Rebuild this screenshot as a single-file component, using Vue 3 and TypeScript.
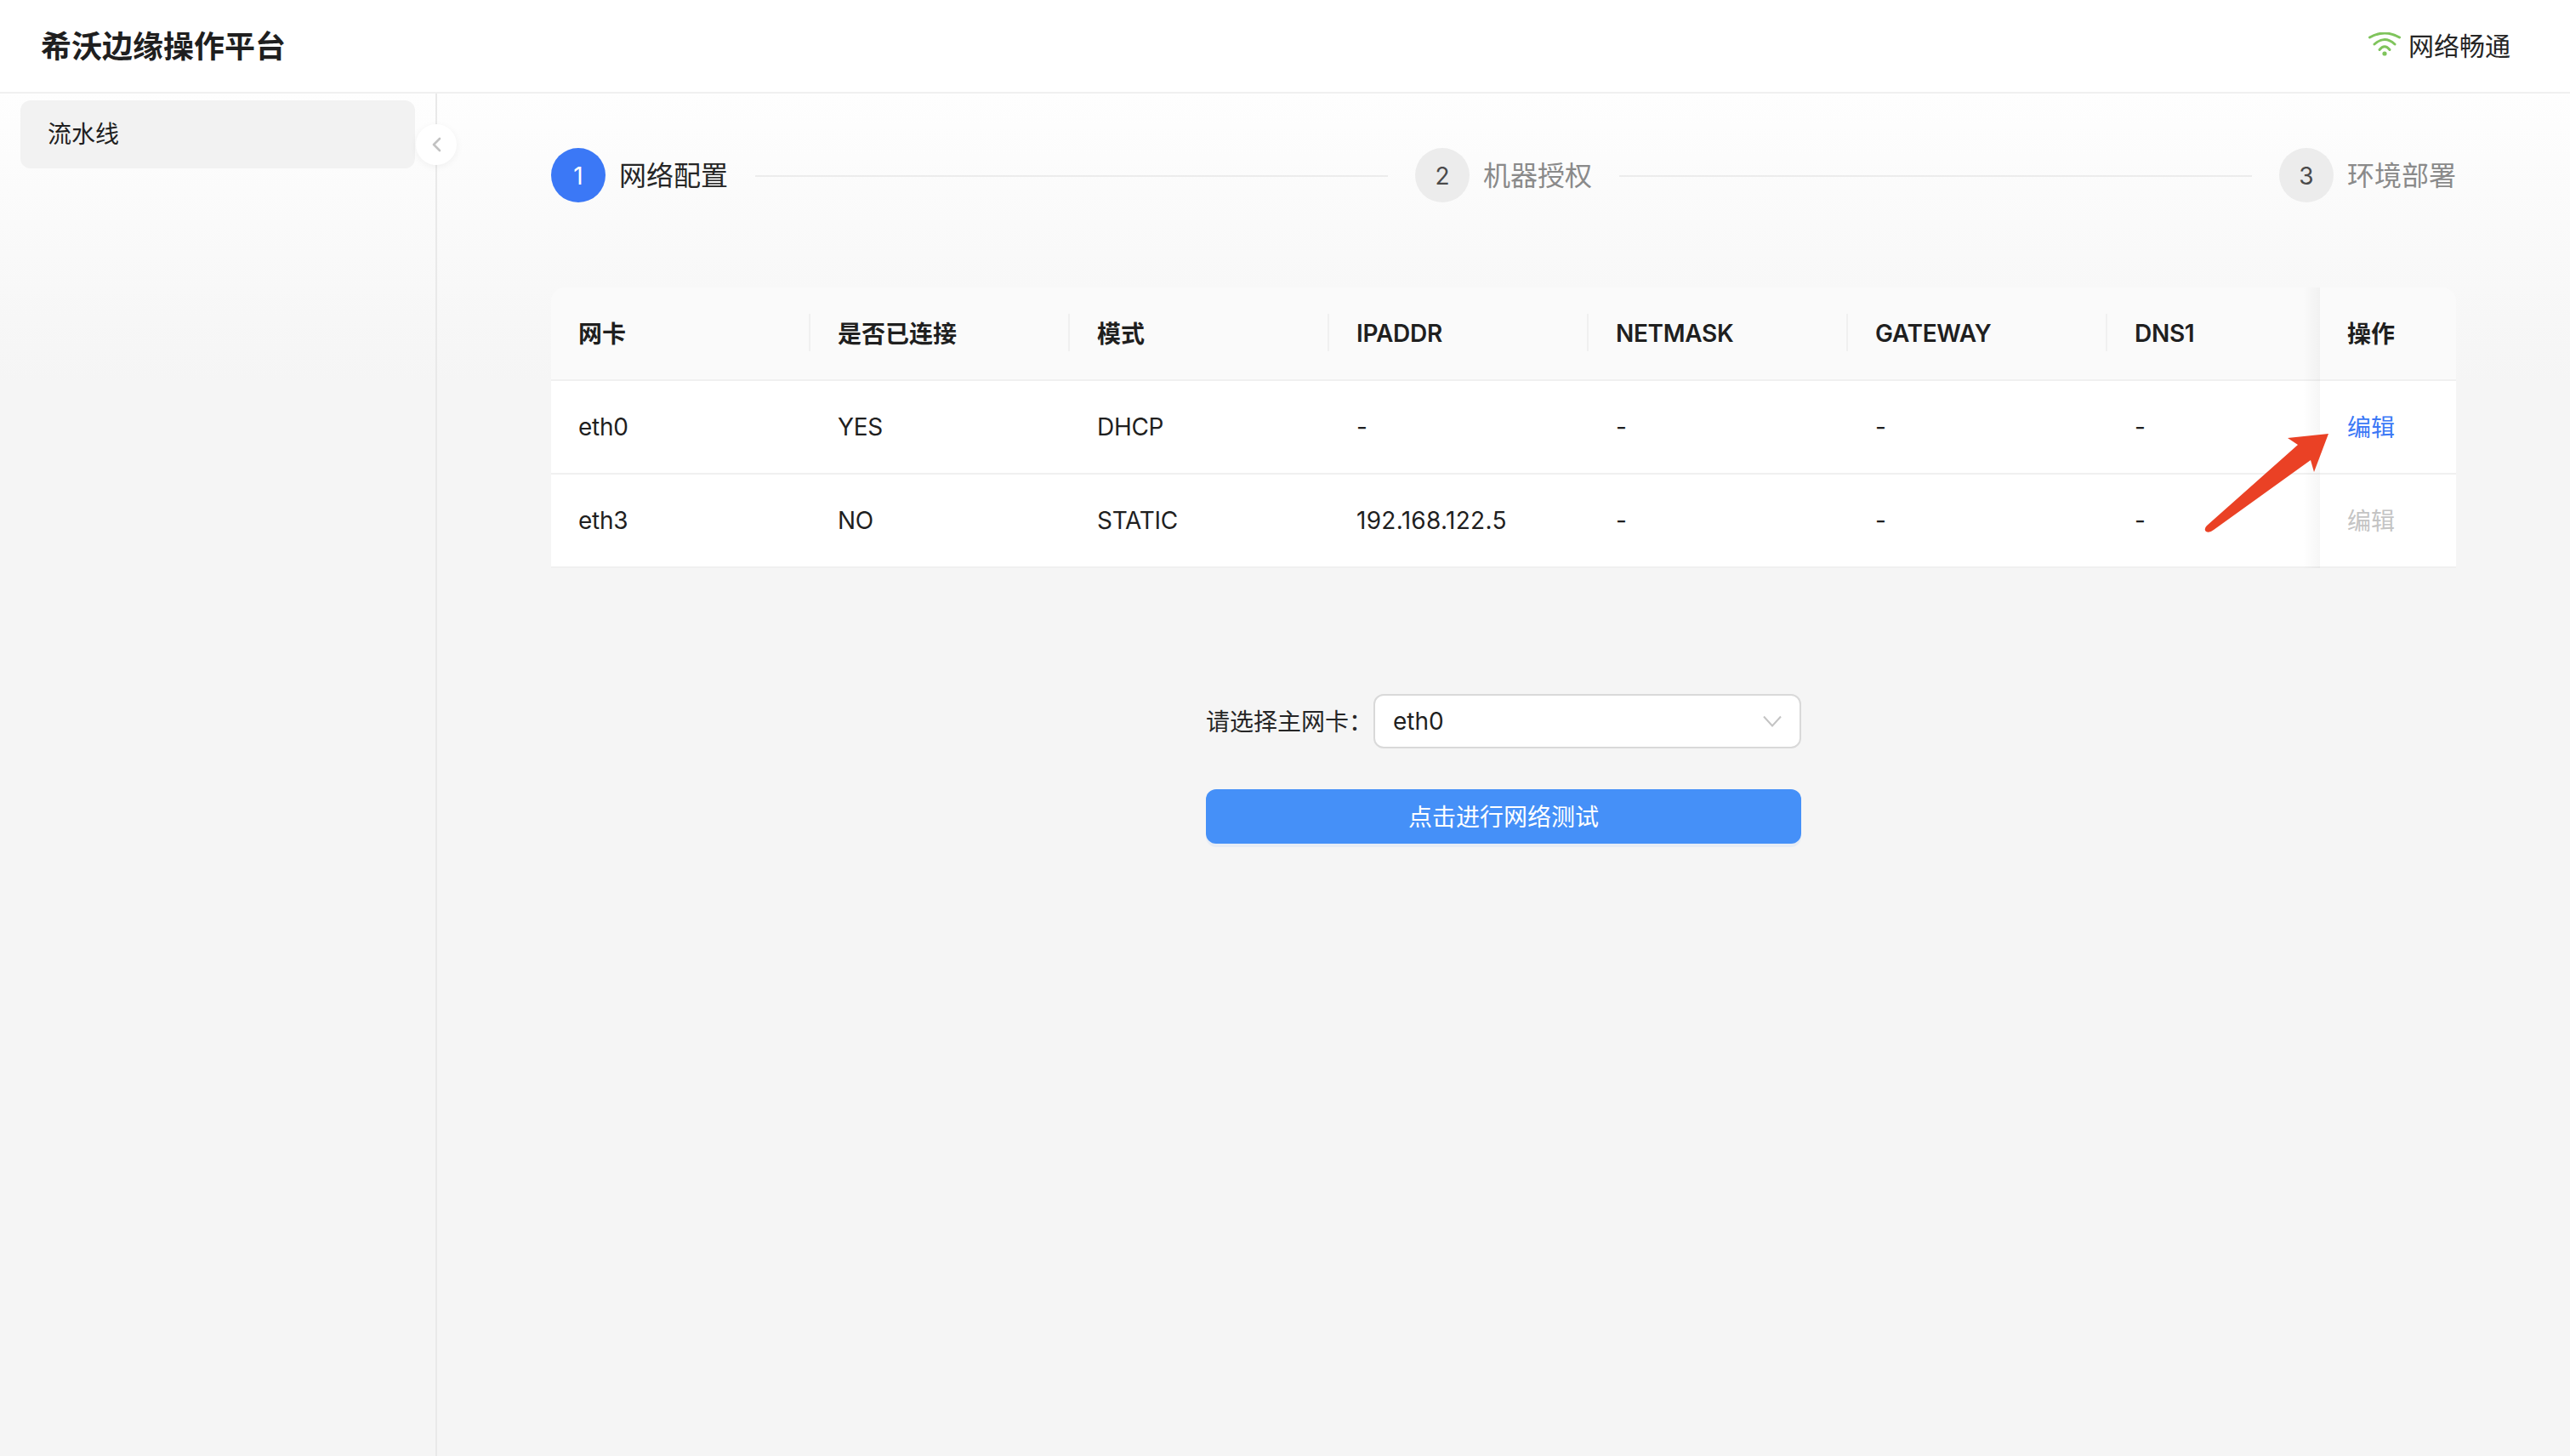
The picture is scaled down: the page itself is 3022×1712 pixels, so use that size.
<script setup lang="ts">
interface Row {
  cells: string[]
  enabled: boolean
}

const steps: string[] = ['网络配置', '机器授权', '环境部署']
const columns: string[] = ['网卡', '是否已连接', '模式', 'IPADDR', 'NETMASK', 'GATEWAY', 'DNS1']
const rows: Row[] = [
  { cells: ['eth0', 'YES', 'DHCP', '-', '-', '-', '-'], enabled: true },
  { cells: ['eth3', 'NO', 'STATIC', '192.168.122.5', '-', '-', '-'], enabled: false },
]

const isNumeric = (cell: string): boolean => /^\d/.test(cell)
</script>

<template>
  <div class="app">
    <header class="topbar">
      <div class="brand">希沃边缘操作平台</div>
      <div class="status">
        <svg class="wifi" width="38" height="28" viewBox="0 0 38 28" fill="none">
          <path d="M1.5 6Q19 -4 36.5 6" stroke="#7fc45c" stroke-width="3" stroke-linecap="round" />
          <path d="M7 14Q19 3 31 14" stroke="#7fc45c" stroke-width="3" stroke-linecap="round" />
          <path d="M13 20.5Q19 13 25 20.5" stroke="#7fc45c" stroke-width="3" stroke-linecap="round" />
          <circle cx="19" cy="25" r="2.6" fill="#7fc45c" />
        </svg>
        <span>网络畅通</span>
      </div>
    </header>

    <div class="body">
      <aside class="sidebar">
        <div class="menu-item">流水线</div>
        <button class="collapse" type="button" aria-label="收起">
          <svg width="12" height="18" viewBox="0 0 12 18" fill="none">
            <path d="M10 2L3 9L10 16" stroke="#c2c2c2" stroke-width="2.6" stroke-linecap="round" stroke-linejoin="round" />
          </svg>
        </button>
      </aside>

      <main class="main">
        <ol class="steps">
          <li v-for="(step, i) in steps" :key="step" class="step" :class="{ active: i === 0, last: i === steps.length - 1 }">
            <span class="dot">{{ i + 1 }}</span>
            <span class="step-label">{{ step }}</span>
            <span v-if="i < steps.length - 1" class="step-line"></span>
          </li>
        </ol>

        <div class="table-wrap">
          <table class="table">
            <colgroup>
              <col v-for="c in 6" :key="c" class="col-std" />
              <col class="col-dns" />
              <col class="col-op" />
            </colgroup>
            <thead>
              <tr>
                <th v-for="col in columns" :key="col" class="sep">{{ col }}</th>
                <th class="op">操作</th>
              </tr>
            </thead>
            <tbody>
              <tr v-for="row in rows" :key="row.cells[0]">
                <td v-for="(cell, i) in row.cells" :key="i" :class="{ num: isNumeric(cell) }">{{ cell }}</td>
                <td class="op">
                  <a class="edit" :class="{ disabled: !row.enabled }">编辑</a>
                </td>
              </tr>
            </tbody>
          </table>
        </div>

        <div class="form">
          <div class="field">
            <label class="field-label">请选择主网卡：</label>
            <div class="select">
              <span>eth0</span>
              <svg width="24" height="14" viewBox="0 0 24 14" fill="none">
                <path d="M2 1.5L12 12.5L22 1.5" stroke="#c4c4c4" stroke-width="2" />
              </svg>
            </div>
          </div>
          <button class="test-btn" type="button">点击进行网络测试</button>
        </div>
      </main>
    </div>

    <svg class="arrow" width="150" height="122" viewBox="0 0 150 122">
      <path
        d="M148 6L100 11L112 19L5 114Q1 118 4 121Q8 123 13 119L127 37L131 51Z"
        fill="#ea4125"
      />
    </svg>
  </div>
</template>

<style scoped>
.app {
  position: relative;
  display: flex;
  flex-direction: column;
  min-height: 1712px;
  font-family: Inter, "Noto Sans CJK SC", sans-serif;
  color: #1f1f1f;
  background: #f5f5f5;
}
.topbar {
  display: flex;
  align-items: center;
  justify-content: space-between;
  box-sizing: border-box;
  height: 110px;
  padding: 0 70px 4px 48px;
  background: #fff;
  border-bottom: 2px solid #f0f0f0;
}
.brand {
  font-size: 36px;
  font-weight: 600;
  color: #1f1f1f;
}
.status {
  display: flex;
  align-items: center;
  gap: 9px;
  font-size: 30px;
  color: #262626;
}
.wifi {
  margin-top: 0;
}
.body {
  flex: 1;
  display: flex;
  background: linear-gradient(180deg, #fefefe 0, #f5f5f5 340px);
}
.sidebar {
  position: relative;
  box-sizing: border-box;
  flex: none;
  width: 514px;
  padding: 8px 24px 0;
  border-right: 2px solid #e9e9e9;
}
.menu-item {
  box-sizing: border-box;
  width: 464px;
  height: 80px;
  padding-left: 32px;
  line-height: 80px;
  font-size: 28px;
  background: #f2f2f2;
  border-radius: 12px;
}
.collapse {
  position: absolute;
  top: 36px;
  right: -25px;
  display: flex;
  align-items: center;
  justify-content: center;
  width: 48px;
  height: 48px;
  padding: 0;
  background: #fff;
  border: none;
  border-radius: 50%;
  box-shadow: 0 2px 8px rgba(0, 0, 0, 0.05);
}
.main {
  flex: 1;
  min-width: 0;
  padding: 64px 134px 0;
}
.steps {
  display: flex;
  align-items: center;
  margin: 0;
  padding: 0;
  list-style: none;
}
.step {
  flex: 1;
  display: flex;
  align-items: center;
  padding-right: 32px;
}
.step.last {
  flex: none;
  padding-right: 0;
}
.dot {
  flex: none;
  width: 64px;
  height: 64px;
  margin-right: 16px;
  line-height: 66px;
  text-align: center;
  font-size: 28px;
  color: #4a4a4a;
  background: #ececec;
  border-radius: 50%;
}
.step-label {
  flex: none;
  font-size: 32px;
  line-height: 66px;
  height: 64px;
  color: #8a8a8a;
}
.step-line {
  flex: 1;
  height: 2px;
  margin-left: 32px;
  margin-top: 1px;
  background: #ececec;
}
.step.active .dot {
  color: #fff;
  background: #3b78f6;
}
.step.active .step-label {
  color: #262626;
}
.table-wrap {
  margin-top: 100px;
}
.table {
  width: 2240px;
  table-layout: fixed;
  border-collapse: separate;
  border-spacing: 0;
  font-size: 28px;
  color: #1f1f1f;
}
.col-std {
  width: 305px;
}
.col-dns {
  width: 250px;
}
.col-op {
  width: 160px;
}
th,
td {
  position: relative;
  box-sizing: border-box;
  height: 110px;
  padding: 0 32px;
  text-align: left;
  border-bottom: 2px solid #f0f0f0;
  letter-spacing: -0.3px;
}
th {
  font-weight: 600;
  background: #fafafa;
}
td {
  background: #fff;
}
td.num {
  letter-spacing: 0.3px;
}
th:nth-child(-n + 3),
th.op,
td.op {
  padding-bottom: 2px;
  letter-spacing: 0;
}
th:first-child {
  border-top-left-radius: 16px;
}
th:last-child {
  border-top-right-radius: 16px;
}
.sep::after {
  content: "";
  position: absolute;
  top: 31px;
  right: 0;
  width: 2px;
  height: 44px;
  background: #f0f0f0;
}
th:nth-child(7)::after {
  display: none;
}
.op::before {
  content: "";
  position: absolute;
  top: 0;
  bottom: -2px;
  left: -20px;
  width: 20px;
  background: linear-gradient(90deg, rgba(0, 0, 0, 0), rgba(0, 0, 0, 0.035));
}
.edit {
  color: #3b78f6;
}
.edit.disabled {
  color: #c4c4c4;
}
.form {
  display: flex;
  flex-direction: column;
  gap: 48px;
  width: 700px;
  margin: 148px auto 0;
}
.field {
  display: flex;
  align-items: center;
  gap: 0;
  font-size: 28px;
}
.field-label {
  flex: none;
  width: 197px;
  padding-bottom: 2px;
  color: #262626;
  white-space: nowrap;
}
.select {
  flex: 1;
  display: flex;
  align-items: center;
  justify-content: space-between;
  box-sizing: border-box;
  height: 64px;
  padding: 0 20px 0 21px;
  background: #fff;
  border: 2px solid #d9d9d9;
  border-radius: 12px;
}
.test-btn {
  height: 64px;
  padding: 0 0 2px;
  font-family: inherit;
  font-size: 28px;
  color: #fff;
  background: #4590f8;
  border: none;
  border-radius: 12px;
  box-shadow: 0 4px 0 rgba(5, 110, 255, 0.06);
}
.arrow {
  position: absolute;
  top: 504px;
  left: 2590px;
}
</style>
